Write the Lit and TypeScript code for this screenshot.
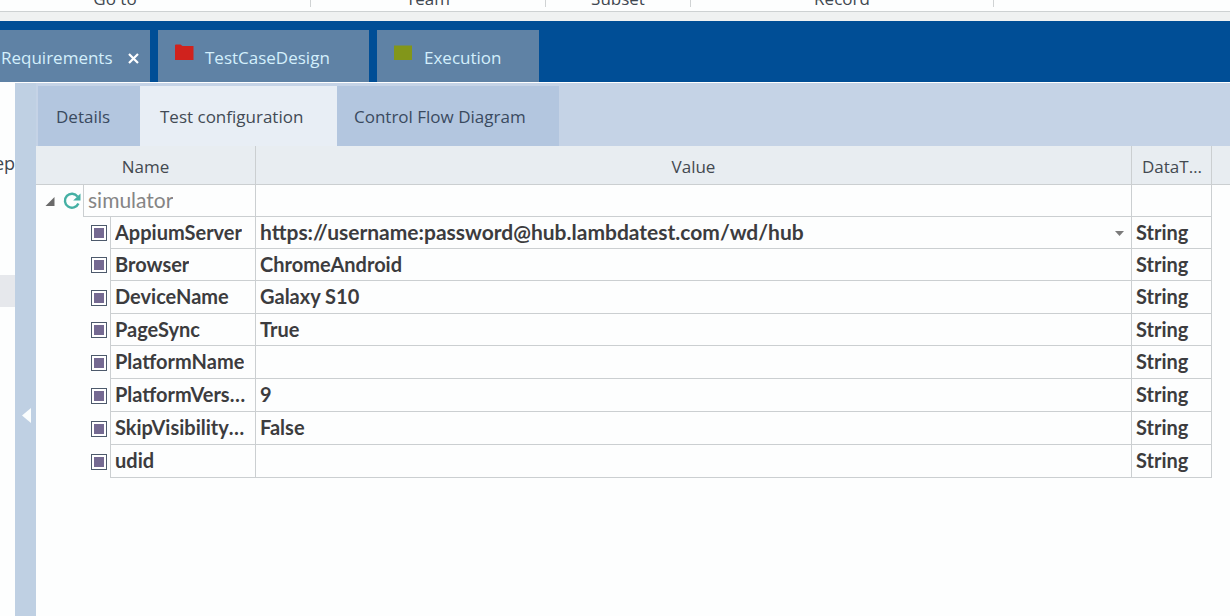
import { LitElement, html, css, svg, nothing } from "lit";
import { customElement, state } from "lit/decorators.js";

interface ConfigParam {
  name: string;
  value: string;
  type: string;
  choice?: boolean;
}

const RIBBON_GROUPS = ["Go to", "Team", "Subset", "Record"];

const PARAMS: ConfigParam[] = [
  { name: "AppiumServer", value: "https://username:password@hub.lambdatest.com/wd/hub", type: "String", choice: true },
  { name: "Browser", value: "ChromeAndroid", type: "String" },
  { name: "DeviceName", value: "Galaxy S10", type: "String" },
  { name: "PageSync", value: "True", type: "String" },
  { name: "PlatformName", value: "", type: "String" },
  { name: "PlatformVersion", value: "9", type: "String" },
  { name: "SkipVisibilityCheck", value: "False", type: "String" },
  { name: "udid", value: "", type: "String" },
];

const folder = (kind: string) => html`
  <svg class="folder ${kind}" viewBox="0 0 19 17" aria-hidden="true">
    ${kind === "red"
      ? svg`<path d="M0 1.5Q0 .5 1 .5H5.5L7.5 2H18.5V16H0Z" />`
      : svg`<path d="M0 1.5H18V16H0Z" />`}
  </svg>
`;

@customElement("workspace-tabs")
export class WorkspaceTabs extends LitElement {
  static styles = css`
    :host {
      display: block;
      background: #004e96;
      overflow: hidden;
    }
    .bar {
      display: flex;
      gap: 8px;
      padding-top: 9px;
      height: 52px;
    }
    .tab {
      display: flex;
      align-items: center;
      background: #5f82a5;
      height: 52px;
    }
    .requirements {
      width: 150px;
    }
    .design {
      width: 211px;
    }
    .execution {
      width: 162px;
    }
    button {
      border: 0;
      padding: 0;
      background: none;
      font: inherit;
      color: #d3effc;
      cursor: pointer;
    }
    .label {
      flex: 1;
      display: flex;
      align-items: center;
      gap: 11px;
      padding: 4px 0 0 17px;
      height: 52px;
      box-sizing: border-box;
    }
    .requirements .label {
      padding-left: 1px;
    }
    .close {
      display: flex;
      width: 33px;
      padding: 4px 0 0 0;
      justify-content: center;
    }
    .close svg {
      width: 11px;
      height: 11px;
      fill: none;
      stroke: #fff;
      stroke-width: 2.2;
    }
    .folder {
      width: 19px;
      height: 17px;
      margin-bottom: 11px;
    }
    .red {
      fill: #d0221d;
    }
    .olive {
      fill: #82961a;
    }
  `;

  render() {
    return html`
      <nav class="bar" role="tablist" aria-label="Workspaces">
        <div class="tab requirements">
          <button class="label" role="tab">Requirements</button>
          <button class="close" aria-label="Close Requirements">
            <svg viewBox="0 0 11 11"><path d="M1 1L10 10M10 1L1 10" /></svg>
          </button>
        </div>
        <div class="tab design">
          <button class="label" role="tab">${folder("red")}<span>TestCaseDesign</span></button>
        </div>
        <div class="tab execution">
          <button class="label" role="tab">${folder("olive")}<span>Execution</span></button>
        </div>
      </nav>
    `;
  }
}

@customElement("config-table")
export class ConfigTable extends LitElement {
  static styles = css`
    :host {
      display: block;
      color: #3c3c3e;
    }
    table {
      width: 100%;
      table-layout: fixed;
      border-collapse: separate;
      border-spacing: 0;
    }
    .col-name {
      width: 220px;
    }
    .col-type {
      width: 80px;
    }
    .col-rest {
      width: 18px;
    }
    th,
    td {
      padding: 0;
      box-sizing: border-box;
      border-right: 1px solid #cbcfd1;
      border-bottom: 1px solid #cbcfd1;
      overflow: hidden;
      white-space: nowrap;
      text-overflow: ellipsis;
    }
    thead th {
      height: 39px;
      padding-top: 4px;
      background: #e8edf1;
      font-weight: 400;
      color: #434950;
    }
    thead th.type {
      padding-left: 10px;
      padding-right: 8px;
    }
    .rest {
      border-right: 0;
    }
    td.rest {
      border-bottom: 0;
    }
    tbody th {
      border-bottom: 0;
      text-align: left;
    }
    tbody td {
      padding-left: 4px;
      padding-bottom: 2px;
    }
    tbody {
      font-family: "Lato", "Carlito", "Open Sans", sans-serif;
      font-size: 20px;
      font-weight: 700;
      line-height: 24px;
    }
    tbody tr {
      height: 33px;
    }
    tbody tr:nth-child(-n + 3),
    tbody tr:nth-child(5) {
      height: 32px;
    }
    tbody th {
      height: inherit;
    }
    .name {
      display: flex;
      height: 100%;
    }
    .lead {
      flex: none;
      display: flex;
      align-items: center;
      justify-content: flex-end;
      width: 47px;
      box-sizing: border-box;
    }
    .leaf {
      width: 74px;
      padding-right: 3px;
    }
    .title {
      flex: 1;
      min-width: 0;
      display: flex;
      align-items: center;
      padding: 0 6px 2px 4px;
      border-left: 1px solid #cbcfd1;
      border-bottom: 1px solid #cbcfd1;
    }
    .text {
      overflow: hidden;
      text-overflow: ellipsis;
    }
    .group {
      font-size: 21px;
      font-weight: 400;
      color: #858585;
    }
    .twisty {
      display: flex;
      padding: 0;
      border: 0;
      background: none;
      margin-right: 8px;
    }
    .twisty svg {
      width: 10px;
      height: 9px;
      fill: #6a6a6a;
    }
    .refresh {
      width: 18px;
      height: 18px;
      margin-right: 2px;
    }
    .marker {
      width: 16px;
      height: 16px;
    }
    .choice {
      display: flex;
      align-items: center;
      font-size: 21px;
    }
    select {
      flex: 1;
      min-width: 0;
      height: 24px;
      margin: 0;
      padding: 0;
      border: 0;
      appearance: none;
      background: none;
      font: inherit;
      color: inherit;
    }
    .caret {
      width: 9px;
      height: 5px;
      margin-right: 7px;
      margin-top: 4px;
      fill: #7b7b7b;
    }
  `;

  render() {
    return html`
      <table>
        <colgroup>
          <col class="col-name" />
          <col />
          <col class="col-type" />
          <col class="col-rest" />
        </colgroup>
        <thead>
          <tr>
            <th scope="col">Name</th>
            <th scope="col">Value</th>
            <th scope="col" class="type">DataType</th>
            <th class="rest"></th>
          </tr>
        </thead>
        <tbody>
          <tr>
            <th scope="row">
              <div class="name">
                <span class="lead">
                  <button class="twisty" aria-label="Collapse simulator" aria-expanded="true">
                    <svg viewBox="0 0 10 9"><path d="M9.5 0V9H.5Z" /></svg>
                  </button>
                  <svg class="refresh" viewBox="0 0 18 18" aria-hidden="true">
                    <path d="M14.6 4.6A7 7 0 1 0 15.4 11.5" fill="none" stroke="#45b0a4" stroke-width="2.4" />
                    <path d="M17.5 1.5V8.5H10.2Z" fill="#45b0a4" />
                  </svg>
                </span>
                <span class="title group"><span class="text">simulator</span></span>
              </div>
            </th>
            <td></td>
            <td></td>
            <td class="rest"></td>
          </tr>
          ${PARAMS.map(
            (p) => html`
              <tr>
                <th scope="row">
                  <div class="name">
                    <span class="lead leaf">
                      <svg class="marker" viewBox="0 0 16 16" aria-hidden="true">
                        <rect x=".5" y=".5" width="15" height="15" fill="#fff" stroke="#4d5a6c" />
                        <rect x="3" y="3" width="10" height="10" fill="#756a92" />
                      </svg>
                    </span>
                    <span class="title"><span class="text">${p.name}</span></span>
                  </div>
                </th>
                <td>
                  ${p.choice
                    ? html`<div class="choice">
                        <select aria-label=${p.name}>
                          <option>${p.value}</option>
                        </select>
                        <svg class="caret" viewBox="0 0 9 5" aria-hidden="true"><path d="M0 0H9L4.5 5Z" /></svg>
                      </div>`
                    : p.value || nothing}
                </td>
                <td>${p.type}</td>
                <td class="rest"></td>
              </tr>
            `
          )}
        </tbody>
      </table>
    `;
  }
}

@customElement("app-root")
export class AppRoot extends LitElement {
  static styles = css`
    :host {
      display: flex;
      flex-direction: column;
      height: 100vh;
      overflow: hidden;
      background: #fdfefe;
      font-family: "Open Sans", "Noto Sans", sans-serif;
      font-size: 17px;
      line-height: 24px;
      color: #3f4750;
    }
    .ribbon {
      flex: none;
      display: flex;
      align-items: flex-end;
      height: 11px;
      margin-left: -80px;
      overflow: hidden;
      border-bottom: 1px solid #cdd1d2;
    }
    .group {
      flex: none;
      box-sizing: border-box;
      height: 32px;
      padding-top: 12px;
      margin-bottom: 4px;
      border-right: 1px solid #d0d3d4;
      text-align: center;
    }
    .group:nth-child(1) {
      width: 391px;
    }
    .group:nth-child(2) {
      width: 235px;
    }
    .group:nth-child(3) {
      width: 145px;
    }
    .group:nth-child(4) {
      width: 303px;
    }
    .strip {
      flex: none;
      height: 9px;
      background: #eff1f1;
    }
    workspace-tabs {
      flex: none;
      border-bottom: 1px solid #fff;
    }
    .body {
      flex: 1;
      min-height: 0;
      display: flex;
    }
    .tree {
      flex: none;
      display: flex;
      flex-direction: column;
      width: 15px;
      overflow: hidden;
    }
    .heading {
      display: flex;
      justify-content: flex-end;
      padding-top: 68px;
      height: 124px;
      font-size: 18px;
    }
    .selected {
      height: 32px;
      background: #e6e8ec;
    }
    .splitter {
      flex: none;
      display: flex;
      align-items: center;
      justify-content: center;
      width: 21px;
      padding: 132px 0 0 2px;
      border: 0;
      background: #bfd0e3;
      cursor: pointer;
    }
    .splitter svg {
      width: 9px;
      height: 15px;
      fill: #fafdfd;
    }
    .main {
      flex: 1;
      min-width: 0;
    }
    .subtabs {
      display: flex;
      padding: 3px 0 0 2px;
      height: 60px;
      background: #c5d3e6;
    }
    .subtab {
      border: 0;
      height: 60px;
      padding: 2px 0 0 0;
      background: #b3c6df;
      font: inherit;
      color: #3a4a60;
      text-align: left;
      cursor: pointer;
    }
    .details {
      width: 102px;
      padding-left: 18px;
    }
    .config {
      width: 197px;
      padding-left: 20px;
    }
    .flow {
      width: 222px;
      padding-left: 17px;
    }
    .active {
      background: #e8eef5;
      color: #424a54;
    }
  `;

  @state() private active = "config";

  private subtab(id: string, label: string) {
    const on = this.active === id;
    return html`<button
      class="subtab ${id} ${on ? "active" : ""}"
      role="tab"
      aria-selected=${on ? "true" : "false"}
      @click=${() => (this.active = id)}
    >${label}</button>`;
  }

  render() {
    return html`
      <header class="ribbon">${RIBBON_GROUPS.map((g) => html`<span class="group">${g}</span>`)}</header>
      <div class="strip"></div>
      <workspace-tabs></workspace-tabs>
      <div class="body">
        <aside class="tree">
          <div class="heading">ep</div>
          <div class="selected"></div>
        </aside>
        <button class="splitter" aria-label="Collapse tree">
          <svg viewBox="0 0 9 15"><path d="M9 0V15L0 7.5Z" /></svg>
        </button>
        <main class="main">
          <div class="subtabs" role="tablist" aria-label="Views">
            ${this.subtab("details", "Details")}
            ${this.subtab("config", "Test configuration")}
            ${this.subtab("flow", "Control Flow Diagram")}
          </div>
          <config-table></config-table>
        </main>
      </div>
    `;
  }
}
